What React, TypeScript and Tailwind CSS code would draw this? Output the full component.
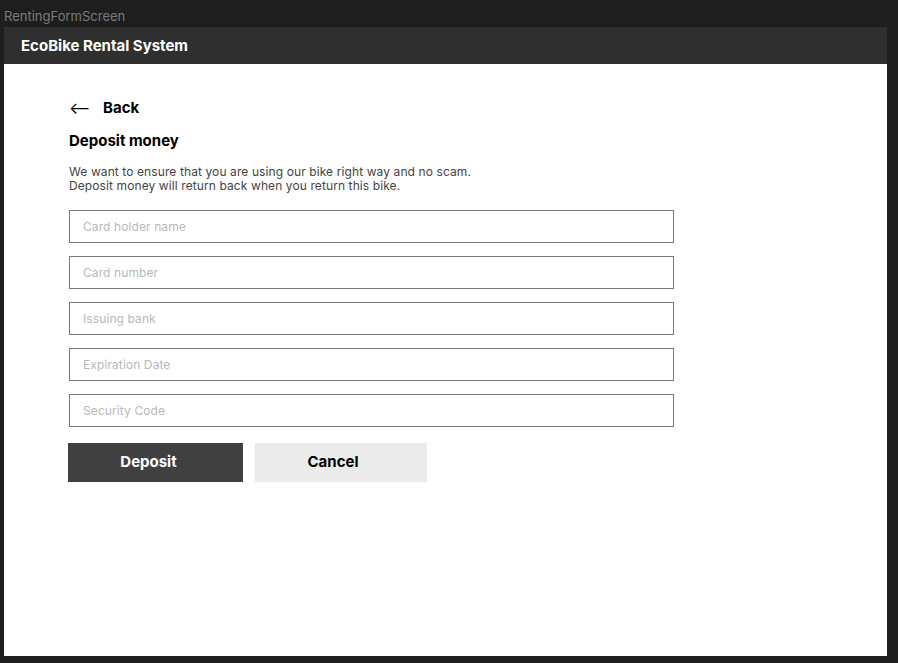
import React from "react";

const fields = ["Card holder name", "Card number", "Issuing bank", "Expiration Date", "Security Code"];

export default function App() {
  return (
    <div className="w-[898px] h-[663px] bg-[#1e1e1e] flex flex-col overflow-hidden" style={{ fontFamily: "Inter, 'Noto Sans', sans-serif" }}>
      <div className="h-[27px] pl-[4px] pt-[7px] text-[13px] leading-[18px] text-[#7a7a7a]">RentingFormScreen</div>
      <div className="ml-[4px] w-[883px] h-[629px] flex flex-col bg-white">
        <div className="h-[37px] bg-[#2f2f2f] flex items-center pl-[17px] pt-[2px] text-white text-[15px] font-bold">EcoBike Rental System</div>
        <div className="flex flex-col pl-[65px] pt-[34px]">
          <div className="flex items-center h-[20px] text-[15px] font-bold text-black">
            <span className="w-[34px] text-[16px] leading-none font-normal">⟵</span>
            <span>Back</span>
          </div>
          <div className="mt-[13px] text-[15px] leading-[20px] font-bold text-black">Deposit money</div>
          <div className="mt-[14px] text-[12px] leading-[14px] tracking-[0.1px] text-[#444]">
            <div>We want to ensure that you are using our bike right way and no scam.</div>
            <div>Deposit money will return back when you return this bike.</div>
          </div>
          <div className="mt-[17px] flex flex-col gap-[13px] w-[605px]">
            {fields.map((f) => (
              <input
                key={f}
                placeholder={f}
                className="h-[33px] border border-[#7a7a7a] px-[13px] text-[12px] tracking-[0.1px] placeholder:text-[#b8b8b8] outline-none"
              />
            ))}
          </div>
          <div className="mt-[16px] flex gap-[12px] -ml-[1px]">
            <button className="w-[175px] h-[39px] pr-[14px] bg-[#404040] text-white text-[15px] font-bold">Deposit</button>
            <button className="w-[172px] h-[39px] pr-[16px] bg-[#ebebeb] text-black text-[15px] font-bold">Cancel</button>
          </div>
        </div>
      </div>
    </div>
  );
}
